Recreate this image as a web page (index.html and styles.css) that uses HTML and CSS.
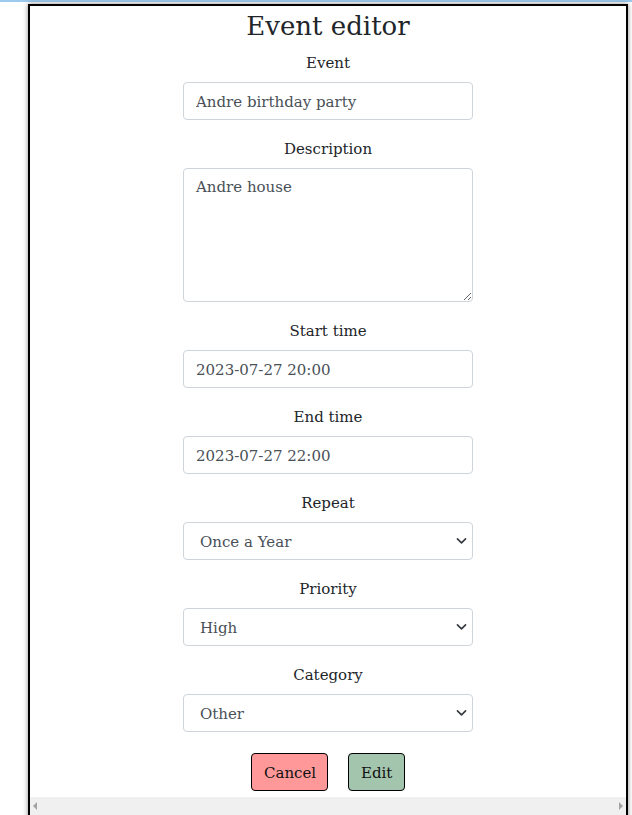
FILE: index.html
```html
<!DOCTYPE html>
<html lang="en">
<head>
<meta charset="utf-8">
<title>Event editor</title>
<link rel="stylesheet" href="styles.css">
</head>
<body>
<div class="topbar"></div>
<div class="frame">
  <div class="content">
    <h1 class="title">Event editor</h1>
    <form class="form">
      <div class="group">
        <label class="label">Event</label>
        <input class="control" type="text" value="Andre birthday party">
      </div>
      <div class="group">
        <label class="label">Description</label>
        <textarea class="control area">Andre house</textarea>
      </div>
      <div class="group">
        <label class="label">Start time</label>
        <input class="control" type="text" value="2023-07-27 20:00">
      </div>
      <div class="group">
        <label class="label">End time</label>
        <input class="control" type="text" value="2023-07-27 22:00">
      </div>
      <div class="group">
        <label class="label">Repeat</label>
        <div class="select-wrap">
          <select class="control select"><option>Once a Year</option></select>
          <svg class="chev" width="16" height="16" viewBox="0 0 16 16"><path d="M3 6l5 5 5-5" fill="none" stroke="#343a40" stroke-width="2" stroke-linecap="round" stroke-linejoin="round"/></svg>
        </div>
      </div>
      <div class="group">
        <label class="label">Priority</label>
        <div class="select-wrap">
          <select class="control select"><option>High</option></select>
          <svg class="chev" width="16" height="16" viewBox="0 0 16 16"><path d="M3 6l5 5 5-5" fill="none" stroke="#343a40" stroke-width="2" stroke-linecap="round" stroke-linejoin="round"/></svg>
        </div>
      </div>
      <div class="group">
        <label class="label">Category</label>
        <div class="select-wrap">
          <select class="control select"><option>Other</option></select>
          <svg class="chev" width="16" height="16" viewBox="0 0 16 16"><path d="M3 6l5 5 5-5" fill="none" stroke="#343a40" stroke-width="2" stroke-linecap="round" stroke-linejoin="round"/></svg>
        </div>
      </div>
      <div class="buttons">
        <button type="button" class="btn btn-cancel">Cancel</button>
        <button type="button" class="btn btn-edit">Edit</button>
      </div>
    </form>
  </div>
  <div class="hscroll">
    <span class="arrow arrow-left"></span>
    <span class="arrow arrow-right"></span>
  </div>
</div>
</body>
</html>
```

FILE: styles.css
```css
html, body {
  margin: 0;
  padding: 0;
  background: #ffffff;
  overflow: hidden;
  height: 815px;
}
body {
  font-family: "DejaVu Serif", "Liberation Serif", serif;
  color: #212529;
}
.topbar {
  height: 2px;
  background: #9cc9ee;
  margin-bottom: 2px;
}
.frame {
  margin-left: 28px;
  width: 596px;
  height: 830px;
  border: 2px solid #000;
  border-bottom: none;
  box-shadow: 0 0 5px rgba(0, 0, 0, 0.45);
  background: #fff;
  display: flex;
  flex-direction: column;
}
.content {
  height: 791px;
  flex: none;
  display: flex;
  flex-direction: column;
  align-items: center;
}
.title {
  margin: 0 0 6px;
  padding-top: 2px;
  font-weight: 400;
  font-size: 26px;
  line-height: 36px;
  color: #212529;
}
.form {
  display: flex;
  flex-direction: column;
  align-items: center;
}
.group {
  display: flex;
  flex-direction: column;
  align-items: center;
  margin-bottom: 16px;
}
.label {
  font-size: 15px;
  line-height: 24px;
  padding-top: 1px;
  margin-bottom: 7px;
}
.control {
  box-sizing: border-box;
  width: 290px;
  height: 38px;
  padding: 7px 12px 5px;
  font-family: "DejaVu Serif", "Liberation Serif", serif;
  font-size: 15px;
  color: #495057;
  background: #fff;
  border: 1px solid #ced4da;
  border-radius: 4px;
  outline: none;
  margin: 0;
}
.area {
  height: 134px;
  padding-top: 9px;
  resize: vertical;
  display: block;
}
.select-wrap {
  position: relative;
}
.select {
  appearance: none;
  -webkit-appearance: none;
  padding-left: 16px;
  display: block;
}
.chev {
  position: absolute;
  right: 5px;
  top: 12px;
  width: 13px;
  height: 13px;
  pointer-events: none;
}
.buttons {
  display: flex;
  gap: 20px;
  margin-top: 5px;
}
.btn {
  box-sizing: border-box;
  height: 38px;
  padding: 2px 12px 0;
  font-family: "DejaVu Serif", "Liberation Serif", serif;
  font-size: 15px;
  color: #111;
  border: 1px solid #000;
  border-radius: 4px;
}
.btn-cancel {
  background: #ff9999;
  width: 77px;
}
.btn-edit {
  background: #a3c4ad;
  width: 57px;
}
.hscroll {
  height: 18px;
  flex: none;
  background: #f0f0f0;
  display: flex;
  justify-content: space-between;
  align-items: center;
  padding: 0 3px;
}
.arrow {
  width: 0;
  height: 0;
  border-top: 4px solid transparent;
  border-bottom: 4px solid transparent;
}
.arrow-left {
  border-right: 4px solid #a3a3a3;
}
.arrow-right {
  border-left: 4px solid #a3a3a3;
}
```
